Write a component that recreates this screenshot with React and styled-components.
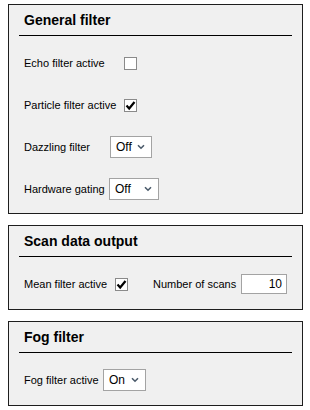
import React from 'react';
import styled, { createGlobalStyle } from 'styled-components';

const GlobalStyle = createGlobalStyle`
    body {
        margin: 0;
        background: #ffffff;
        font-family: "Liberation Sans", Arial, sans-serif;
        color: #000000;
    }
`;

const Page = styled.div`
    width: 310px;
    padding: 4px 0 0 8px;
    box-sizing: border-box;
    display: flex;
    flex-direction: column;
    gap: 11px;
`;

const Panel = styled.div`
    width: 295px;
    box-sizing: border-box;
    background: #f0f0f0;
    border: 1px solid #1e1e1e;
    padding: 0 10px ${props => props.bottom}px 10px;
    display: flex;
    flex-direction: column;
    gap: 20px;
`;

const Title = styled.div`
    height: 30px;
    line-height: 30px;
    padding-left: 5px;
    font-size: 14px;
    font-weight: bold;
    border-bottom: 1px solid #000000;
    margin-bottom: -4px;
`;

const Row = styled.div`
    height: 22px;
    padding-left: 5px;
    display: flex;
    align-items: center;
    font-size: 11px;
`;

const Label = styled.span`
    width: ${props => props.width}px;
    margin-left: ${props => props.offset || 0}px;
    flex-shrink: 0;
    white-space: nowrap;
`;

const Box = styled.span`
    width: 13px;
    height: 13px;
    box-sizing: border-box;
    border: 1px solid #8a8a8a;
    background: #ffffff;
    display: flex;
    align-items: center;
    justify-content: center;
`;

const Select = styled.div`
    width: ${props => props.width}px;
    height: 22px;
    box-sizing: border-box;
    border: 1px solid #a3a3a3;
    background: #ffffff;
    display: flex;
    align-items: center;
    justify-content: space-between;
    padding: 0 6px 0 5px;
    font-size: 12px;
`;

const NumberInput = styled.div`
    width: 46px;
    height: 20px;
    box-sizing: border-box;
    border: 1px solid #a3a3a3;
    background: #ffffff;
    display: flex;
    align-items: center;
    justify-content: flex-end;
    padding-right: 4px;
    font-size: 12px;
`;

const Check = ({ checked }) => (
    <Box>
        {checked && (
            <svg width="11" height="11" viewBox="0 0 11 11">
                <path d="M1.5 5.5 L4.2 8.5 L9.5 2" fill="none" stroke="#000" strokeWidth="2.2" />
            </svg>
        )}
    </Box>
);

const Dropdown = ({ value, width }) => (
    <Select width={width}>
        <span>{value}</span>
        <svg width="8" height="6" viewBox="0 0 8 6">
            <path d="M1 1.2 L4 4.2 L7 1.2" fill="none" stroke="#4a5a6a" strokeWidth="1.6" />
        </svg>
    </Select>
);

const App = () => (
    <>
        <GlobalStyle />
        <Page>
            <Panel bottom={13}>
                <Title>General filter</Title>
                <Row>
                    <Label width={100}>Echo filter active</Label>
                    <Check />
                </Row>
                <Row>
                    <Label width={100}>Particle filter active</Label>
                    <Check checked />
                </Row>
                <Row>
                    <Label width={86}>Dazzling filter</Label>
                    <Dropdown value="Off" width={42} />
                </Row>
                <Row>
                    <Label width={85}>Hardware gating</Label>
                    <Dropdown value="Off" width={50} />
                </Row>
            </Panel>
            <Panel bottom={14}>
                <Title>Scan data output</Title>
                <Row>
                    <Label width={91}>Mean filter active</Label>
                    <Check checked />
                    <Label width={88} offset={25}>Number of scans</Label>
                    <NumberInput>10</NumberInput>
                </Row>
            </Panel>
            <Panel bottom={14}>
                <Title>Fog filter</Title>
                <Row>
                    <Label width={79}>Fog filter active</Label>
                    <Dropdown value="On" width={43} />
                </Row>
            </Panel>
        </Page>
    </>
);

export default App;
